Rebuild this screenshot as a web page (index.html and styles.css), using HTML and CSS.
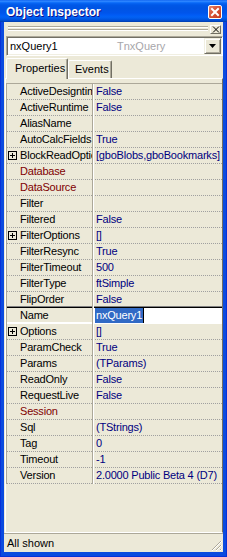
FILE: index.html
```html
<!DOCTYPE html>
<html>
<head>
<meta charset="utf-8">
<title>Object Inspector</title>
<link rel="stylesheet" href="styles.css">
</head>
<body>
<div class="win">
  <div class="title">
    <span class="title-text">Object Inspector</span>
    <span class="close"><svg width="12" height="12" viewBox="0 0 12 12"><path d="M3 3 L9 9 M9 3 L3 9" stroke="#fff" stroke-width="2" stroke-linecap="square"/></svg></span>
  </div>
  <div class="body">
    <div class="griprow">
      <div class="grip"></div>
      <div class="mini-x"><svg width="8" height="7" viewBox="0 0 8 7"><path d="M1 0.5 L7 6.5 M7 0.5 L1 6.5" stroke="#000" stroke-width="1"/></svg></div>
    </div>
    <div class="combo">
      <span class="c-name">nxQuery1</span>
      <span class="c-type">TnxQuery</span>
      <span class="c-btn"><svg width="7" height="4" viewBox="0 0 7 4"><path d="M0 0 H7 L3.5 4 Z" fill="#000"/></svg></span>
    </div>
    <div class="tabs">
      <div class="tab active">Properties</div>
      <div class="tab">Events</div>
    </div>
    <div class="sheet">
      <div class="grid">
        <div class="row"><div class="n">ActiveDesigntime</div><div class="v">False</div></div>
        <div class="row"><div class="n">ActiveRuntime</div><div class="v">False</div></div>
        <div class="row"><div class="n">AliasName</div><div class="v"></div></div>
        <div class="row"><div class="n">AutoCalcFields</div><div class="v">True</div></div>
        <div class="row"><div class="n exp"><span class="plus"></span>BlockReadOptions</div><div class="v">[gboBlobs,gboBookmarks]</div></div>
        <div class="row"><div class="n ref">Database</div><div class="v"></div></div>
        <div class="row"><div class="n ref">DataSource</div><div class="v"></div></div>
        <div class="row"><div class="n">Filter</div><div class="v"></div></div>
        <div class="row"><div class="n">Filtered</div><div class="v">False</div></div>
        <div class="row"><div class="n exp"><span class="plus"></span>FilterOptions</div><div class="v">[]</div></div>
        <div class="row"><div class="n">FilterResync</div><div class="v">True</div></div>
        <div class="row"><div class="n">FilterTimeout</div><div class="v">500</div></div>
        <div class="row"><div class="n">FilterType</div><div class="v">ftSimple</div></div>
        <div class="row"><div class="n">FlipOrder</div><div class="v">False</div></div>
        <div class="row sel"><div class="n">Name</div><div class="v"><span class="hl">nxQuery1</span><span class="caret"></span></div></div>
        <div class="row"><div class="n exp"><span class="plus"></span>Options</div><div class="v">[]</div></div>
        <div class="row"><div class="n">ParamCheck</div><div class="v">True</div></div>
        <div class="row"><div class="n">Params</div><div class="v">(TParams)</div></div>
        <div class="row"><div class="n">ReadOnly</div><div class="v">False</div></div>
        <div class="row"><div class="n">RequestLive</div><div class="v">False</div></div>
        <div class="row"><div class="n ref">Session</div><div class="v"></div></div>
        <div class="row"><div class="n">Sql</div><div class="v">(TStrings)</div></div>
        <div class="row"><div class="n">Tag</div><div class="v">0</div></div>
        <div class="row"><div class="n">Timeout</div><div class="v">-1</div></div>
        <div class="row"><div class="n">Version</div><div class="v">2.0000 Public Beta 4 (D7)</div></div>
      </div>
    </div>
    <div class="status">
      <span class="status-text">All shown</span>
      <svg class="sizegrip" width="11" height="11" viewBox="0 0 11 11">
        <path d="M10 1 L1 10 M10 5 L5 10 M10 9 L9 10" stroke="#ACA899" stroke-width="1"/>
        <path d="M11 1 L1 11 M11 5 L5 11 M11 9 L9 11" stroke="#fff" stroke-width="1"/>
      </svg>
    </div>
  </div>
</div>
</body>
</html>
```

FILE: styles.css
```css
* { box-sizing: border-box; }

html, body {
  margin: 0;
  padding: 0;
  background: #ECE9D8;
}

body {
  font-family: "Liberation Sans", Arial, sans-serif;
  font-size: 11px;
  color: #000;
}

.win {
  width: 227px;
  height: 557px;
  display: flex;
  flex-direction: column;
  background: #0B4BDF;
  box-shadow: inset 1px 0 #0831D9, inset -1px 0 #0831D9, inset 0 -1px #0831D9;
}

.title {
  flex: none;
  height: 22px;
  display: flex;
  align-items: center;
  padding: 0 5px 0 6px;
  background: linear-gradient(180deg, #0058EE 0px, #3A8DFF 1px, #1A7AFF 2px, #0866F4 3px, #0058E8 5px, #0054E3 8px, #0055EB 13px, #005BF5 15px, #0262F4 17px, #0058E6 19px, #0048C8 21px, #003AA8 22px);
}

.title-text {
  flex: 1;
  color: #fff;
  font-weight: bold;
  font-size: 12px;
  text-shadow: 1px 1px #0F1089;
  padding-top: 1px;
}

.close {
  width: 14px;
  height: 14px;
  display: flex;
  align-items: center;
  justify-content: center;
  border: 1px solid #fff;
  border-radius: 2px;
  background: linear-gradient(135deg, #E8876A 0%, #D8573A 40%, #C6391B 100%);
  margin-top: 1px;
}

.body {
  flex: 1;
  margin: 0 4px 5px 4px;
  background: #ECE9D8;
  display: flex;
  flex-direction: column;
}

.griprow {
  flex: none;
  height: 14px;
  display: flex;
  align-items: flex-start;
  padding: 0 2px 0 4px;
}

.grip {
  flex: 1;
  height: 5px;
  margin-top: 4px;
  background: linear-gradient(180deg, #ACA899 0 1px, #fff 1px 2px, transparent 2px 3px, #ACA899 3px 4px, #fff 4px 5px);
}

.mini-x {
  width: 11px;
  height: 9px;
  margin: 3px 0 0 2px;
  display: flex;
  align-items: center;
  justify-content: center;
  border-top: 1px solid #fff;
  border-left: 1px solid #fff;
  border-right: 1px solid #716F64;
  border-bottom: 1px solid #716F64;
  background: #ECE9D8;
}

.combo {
  flex: none;
  height: 20px;
  margin: 0 0 0 2px;
  display: flex;
  align-items: center;
  background: #fff;
  border-top: 1px solid #ACA899;
  border-left: 1px solid #ACA899;
  border-right: 1px solid #fff;
  border-bottom: 1px solid #fff;
  box-shadow: inset 1px 1px #716F64, inset -1px -1px #F1EFE2;
  padding: 1px 1px 1px 3px;
}

.c-name {
  width: 107px;
  white-space: nowrap;
}

.c-type {
  flex: 1;
  color: #A7A6AA;
  white-space: nowrap;
}

.c-btn {
  width: 17px;
  height: 16px;
  display: flex;
  align-items: center;
  justify-content: center;
  background: #ECE9D8;
  border-top: 1px solid #F1EFE2;
  border-left: 1px solid #F1EFE2;
  border-right: 1px solid #716F64;
  border-bottom: 1px solid #716F64;
  box-shadow: inset 1px 1px #fff, inset -1px -1px #ACA899;
}

.tabs {
  flex: none;
  height: 20px;
  margin-top: 2px;
  padding-left: 2px;
  display: flex;
  align-items: flex-end;
  position: relative;
  z-index: 1;
}

.tab {
  height: 18px;
  width: 44px;
  padding-left: 6px;
  line-height: 17px;
  white-space: nowrap;
  background: #ECE9D8;
  border-top: 1px solid #fff;
  border-left: 1px solid #fff;
  border-right: 1px solid #716F64;
  box-shadow: inset -1px 0 #ACA899;
  border-radius: 2px 2px 0 0;
}

.tab.active {
  height: 21px;
  width: 62px;
  padding-left: 8px;
  line-height: 18px;
  margin-bottom: -1px;
}

.sheet {
  flex: 1;
  margin-left: 1px;
  border-top: 1px solid #fff;
  border-left: 1px solid #fff;
  border-right: 1px solid #716F64;
  border-bottom: 1px solid #fff;
  padding-top: 4px;
}

.grid {
  border-top: 1px solid #ACA899;
  border-left: 1px solid #ACA899;
  letter-spacing: -0.2px;
}

.row {
  height: 16px;
  display: flex;
  background: linear-gradient(90deg, #A0A0A0 1px, transparent 1px) 0 100% / 2px 1px repeat-x;
}

.n {
  width: 86px;
  flex: none;
  height: 16px;
  line-height: 15px;
  padding-left: 13px;
  white-space: nowrap;
  overflow: hidden;
  border-right: 1px solid #ACA899;
  position: relative;
}

.n.exp .plus {
  position: absolute;
  left: 1px;
  top: 3px;
  width: 9px;
  height: 9px;
  border: 1px solid #000;
  background:
    linear-gradient(#000, #000) 1px 3px / 5px 1px no-repeat,
    linear-gradient(#000, #000) 3px 1px / 1px 5px no-repeat;
}

.n.ref { color: #800000; }

.v {
  flex: 1;
  height: 16px;
  line-height: 15px;
  padding-left: 2px;
  white-space: nowrap;
  overflow: hidden;
  color: #000080;
  border-left: 1px solid #fff;
}

.row.sel {
  box-shadow: 0 -1px #000, 0 -2px #808080, inset 0 -2px #fff;
}

.row.sel .v {
  background: #fff;
  height: 15px;
  display: flex;
  align-items: stretch;
  padding-left: 1px;
}

.hl {
  background: #316AC5;
  color: #fff;
  padding: 0 1px;
  line-height: 14px;
}

.caret {
  width: 1px;
  background: #000;
}

.status {
  flex: none;
  height: 19px;
  border-top: 1px solid #ACA899;
  display: flex;
  align-items: center;
  padding-left: 3px;
  position: relative;
}

.status-text {
  flex: 1;
  line-height: 18px;
}

.sizegrip {
  align-self: flex-end;
  margin: 0 1px 1px 0;
}
```
